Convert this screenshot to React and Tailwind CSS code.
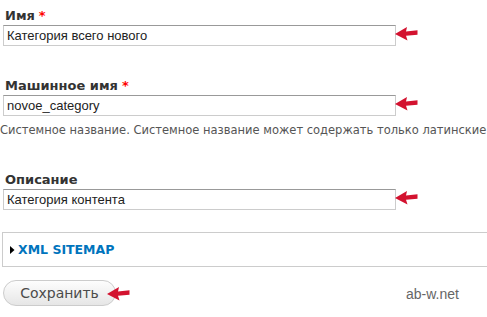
import React from "react";

function Arrow({ className }) {
  return (
    <svg className={className} width="23" height="15" viewBox="0 0 23 15">
      <path d="M0 8 L12 1 L11 5.5 L22.5 4.3 L22.5 8.7 L11 9.8 L12.5 14.5 Z" fill="#d3122f" />
    </svg>
  );
}

function Field({ value }) {
  return (
    <div className="relative w-[393px]">
      <div className="h-[21px] border border-[#ccc] border-t-[#999] bg-white pl-[3px] text-[13px] leading-[19px] text-[#222] font-['Liberation_Sans',Arial,sans-serif]">
        {value}
      </div>
      <Arrow className="absolute left-[392px] top-[1px]" />
    </div>
  );
}

function Label({ children, req }) {
  return (
    <div className="h-[19px] pl-[2px] text-[13px] leading-[19px] font-bold text-[#333] font-['DejaVu_Sans',Verdana,sans-serif]">
      {children}
      {req && <span className="text-[#f00] ml-[4px]">*</span>}
    </div>
  );
}

export default function App() {
  return (
    <div className="w-[487px] h-[317px] bg-white overflow-hidden pl-[3px] pt-[6px] relative">
      <Label req>Имя</Label>
      <Field value="Категория всего нового" />
      <div className="h-[30px]" />
      <Label req>Машинное имя</Label>
      <Field value="novoe_category" />
      <div className="-ml-[3px] mt-[6px] h-[17px] whitespace-nowrap text-[11.5px] leading-[17px] text-[#555] font-['DejaVu_Sans',Verdana,sans-serif]">
        Системное название. Системное название может содержать только латинские
      </div>
      <div className="h-[31px]" />
      <Label>Описание</Label>
      <Field value="Категория контента" />
      <div className="-ml-[1px] mt-[22px] h-[35px] border border-r-0 border-[#ccc] flex items-center pl-[7px]">
        <svg width="5" height="8" viewBox="0 0 5 8" className="mr-[3px]">
          <path d="M0 0 L4.5 4 L0 8 Z" fill="#000" />
        </svg>
        <span className="text-[12.5px] font-bold text-[#0074bd] font-['DejaVu_Sans',Verdana,sans-serif] leading-[16px]">XML SITEMAP</span>
      </div>
      <div className="mt-[13px] flex items-center relative">
        <div className="w-[113px] h-[26px] rounded-full border border-[#ccc] bg-gradient-to-b from-[#fdfdfd] to-[#e6e6e6] flex items-center justify-center text-[14px] text-[#4b4b4b] font-['DejaVu_Sans',Verdana,sans-serif]">
          Сохранить
        </div>
        <Arrow className="absolute left-[104px] top-[6px]" />
        <div className="absolute left-[403px] top-[4px] text-[14px] text-[#666] font-['Liberation_Sans',Arial,sans-serif]">
          ab-w.net
        </div>
      </div>
    </div>
  );
}
